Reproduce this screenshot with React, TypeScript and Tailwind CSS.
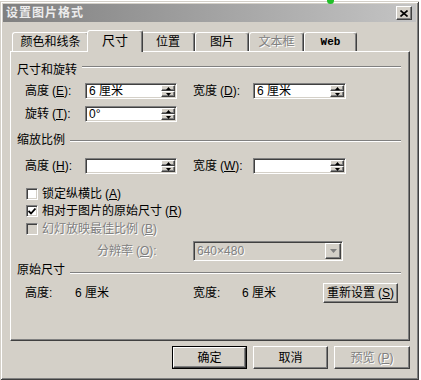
import React from "react";

const raised =
  "border border-t-white border-l-white border-r-[#404040] border-b-[#404040] shadow-[inset_-1px_-1px_0_#808080]";
const sunken =
  "border border-t-[#808080] border-l-[#808080] border-r-white border-b-white shadow-[inset_1px_1px_0_#404040,inset_-1px_-1px_0_#d4d0c8]";
const dim = "text-[#808080] [text-shadow:1px_1px_0_#fff]";

function Key({ k }: { k: string }) {
  return (
    <span className="ml-[3px]">
      (<u className="underline-offset-1">{k}</u>)
    </span>
  );
}

function Arrow({ up }: { up?: boolean }) {
  return (
    <svg width="5" height="3" viewBox="0 0 5 3">
      <path d={up ? "M2.5 0L5 3H0z" : "M0 0H5L2.5 3z"} fill="#000" />
    </svg>
  );
}

function Field({ value, w }: { value?: string; w: string }) {
  return (
    <div className={`${w} h-[16px] bg-white p-[1px] flex ${sunken}`}>
      <span className="flex-1 pl-[2px] text-[12px] leading-[12px] whitespace-nowrap">{value}</span>
      <div className="flex flex-col w-[14px]">
        <div className={`h-[6px] flex items-center justify-center bg-[#d4d0c8] ${raised}`}>
          <Arrow up />
        </div>
        <div className={`h-[6px] flex items-center justify-center bg-[#d4d0c8] ${raised}`}>
          <Arrow />
        </div>
      </div>
    </div>
  );
}

function Heading({ text, line, mt }: { text: string; line: string; mt: string }) {
  return (
    <div className={`h-[16px] flex items-start pl-[6px] pr-[8px] ${mt}`}>
      <span className="leading-[16px] whitespace-nowrap">{text}</span>
      <div className={`flex-1 ml-[5px] border-t border-b border-t-[#808080] border-b-white ${line}`} />
    </div>
  );
}

function Check({ label, k, checked, disabled, mt }: { label: string; k: string; checked?: boolean; disabled?: boolean; mt: string }) {
  return (
    <div className={`h-[16px] flex items-center pl-[15px] ${mt}`}>
      <div className={`w-[12px] h-[12px] flex items-center justify-center ${disabled ? "bg-[#d4d0c8]" : "bg-white"} ${sunken}`}>
        {checked && (
          <svg width="8" height="7" viewBox="0 0 8 7">
            <path d="M0.5 3L3 5.5L7.5 0.5" stroke="#000" strokeWidth="1.8" fill="none" />
          </svg>
        )}
      </div>
      <span className={`ml-[4px] leading-[16px] whitespace-nowrap ${disabled ? dim : ""}`}>
        {label}
        <Key k={k} />
      </span>
    </div>
  );
}

const TABS = [
  { label: "颜色和线条", w: "w-[77px]" },
  { label: "尺寸", w: "w-[56px]", active: true },
  { label: "位置", w: "w-[54px]" },
  { label: "图片", w: "w-[54px]" },
  { label: "文本框", w: "w-[55px]", disabled: true },
  { label: "Web", w: "w-[53px]" },
];

export default function App() {
  return (
    <div className="relative w-[421px] h-[380px] bg-white font-['Liberation_Sans','Noto_Sans_CJK_SC',sans-serif] text-[12px] text-black overflow-hidden">
      <div className="absolute left-[327px] -top-[3px] w-[7px] h-[7px] rounded-full bg-[#22c02a]" />
      <div className="mt-[1px] w-[419px] h-[379px] bg-[#d4d0c8] p-[3px] flex flex-col shadow-[inset_1px_1px_0_#d4d0c8,inset_-1px_-1px_0_#404040,inset_2px_2px_0_#fff,inset_-2px_-2px_0_#808080]">
        {/* title bar */}
        <div className="h-[18px] flex items-center pl-[3px] pr-[4px] bg-[linear-gradient(to_right,#808080,#c4c4c4)]">
          <span className="flex-1 font-bold text-[#ececec] tracking-[1px] leading-[18px]">设置图片格式</span>
          <div className={`w-[16px] h-[14px] flex items-center justify-center bg-[#d4d0c8] ${raised}`}>
            <svg width="8" height="7" viewBox="0 0 8 7">
              <path d="M0.5 0.5L7.5 6.5M7.5 0.5L0.5 6.5" stroke="#000" strokeWidth="1.6" />
            </svg>
          </div>
        </div>

        {/* tabs */}
        <div className="mt-[8px] ml-[9px] h-[21px] flex items-end">
          {TABS.map((t) =>
            t.active ? (
              <div
                key={t.label}
                className={`${t.w} h-[22px] -mx-[2px] -mb-[1px] relative z-10 bg-[#d4d0c8] rounded-t-[3px] border-t border-l border-r border-t-white border-l-white border-r-[#404040] shadow-[inset_-1px_0_0_#808080] flex items-center justify-center pb-[2px] text-[13px]`}
              >
                {t.label}
              </div>
            ) : (
              <div
                key={t.label}
                className={`${t.w} h-[19px] rounded-t-[3px] border-t border-l border-r border-t-white border-l-white border-r-[#404040] shadow-[inset_-1px_0_0_#808080] flex items-center justify-center ${t.disabled ? dim : ""} ${t.label === "Web" ? "font-['Liberation_Mono',monospace] font-bold text-[11px]" : ""}`}
              >
                {t.label}
              </div>
            )
          )}
        </div>

        {/* panel */}
        <div className={`w-[400px] h-[290px] ml-[7px] pt-[10px] flex flex-col ${raised}`}>
          <Heading text="尺寸和旋转" line="mt-[4px]" mt="" />
          <div className="h-[16px] mt-[5px] flex items-center pl-[14px]">
            <span className="w-[60px] whitespace-nowrap">
              高度<Key k="E" />:
            </span>
            <Field value="6 厘米" w="w-[92px]" />
            <span className="w-[16px]" />
            <span className="w-[60px] whitespace-nowrap">
              宽度<Key k="D" />:
            </span>
            <Field value="6 厘米" w="w-[93px]" />
          </div>
          <div className="h-[16px] mt-[7px] flex items-center pl-[14px]">
            <span className="w-[60px] whitespace-nowrap">
              旋转<Key k="T" />:
            </span>
            <Field value="0°" w="w-[92px]" />
          </div>

          <Heading text="缩放比例" line="mt-[8px]" mt="mt-[10px]" />
          <div className="h-[16px] mt-[10px] flex items-center pl-[14px]">
            <span className="w-[60px] whitespace-nowrap">
              高度<Key k="H" />:
            </span>
            <Field w="w-[92px]" />
            <span className="w-[16px]" />
            <span className="w-[60px] whitespace-nowrap">
              宽度<Key k="W" />:
            </span>
            <Field w="w-[93px]" />
          </div>
          <Check label="锁定纵横比" k="A" mt="mt-[12px]" />
          <Check label="相对于图片的原始尺寸" k="R" checked mt="mt-[1px]" />
          <Check label="幻灯放映最佳比例" k="B" disabled mt="mt-[2px]" />
          <div className="h-[20px] mt-[4px] flex items-center pl-[86px]">
            <span className={`w-[96px] whitespace-nowrap ${dim}`}>
              分辨率<Key k="O" />:
            </span>
            <div className={`w-[150px] h-[20px] p-[1px] flex items-center bg-[#d4d0c8] ${sunken}`}>
              <span className={`flex-1 pl-[2px] ${dim}`}>640×480</span>
              <div className={`w-[16px] h-[16px] flex items-center justify-center bg-[#d4d0c8] ${raised}`}>
                <svg width="7" height="4" viewBox="0 0 7 4">
                  <path d="M0 0H7L3.5 4z" fill="#808080" />
                </svg>
              </div>
            </div>
          </div>

          <Heading text="原始尺寸" line="mt-[10px]" mt="mt-[1px]" />
          <div className="h-[20px] mt-[5px] flex items-center pl-[14px]">
            <span className="w-[50px]">高度:</span>
            <span className="w-[118px]">6 厘米</span>
            <span className="w-[49px]">宽度:</span>
            <span className="w-[81px]">6 厘米</span>
            <div className={`w-[75px] h-[20px] flex items-center justify-center bg-[#d4d0c8] ${raised}`}>
              重新设置<Key k="S" />
            </div>
          </div>
        </div>

        {/* dialog buttons */}
        <div className="mt-[5px] mr-[6px] flex justify-end gap-[6px]">
          <div className="w-[75px] h-[23px] border border-black">
            <div className={`w-full h-full flex items-center justify-center bg-[#d4d0c8] ${raised}`}>确定</div>
          </div>
          <div className={`w-[75px] h-[23px] flex items-center justify-center bg-[#d4d0c8] ${raised}`}>取消</div>
          <div className={`w-[76px] h-[23px] flex items-center justify-center bg-[#d4d0c8] ${raised} ${dim}`}>
            预览<Key k="P" />
          </div>
        </div>
      </div>
    </div>
  );
}
